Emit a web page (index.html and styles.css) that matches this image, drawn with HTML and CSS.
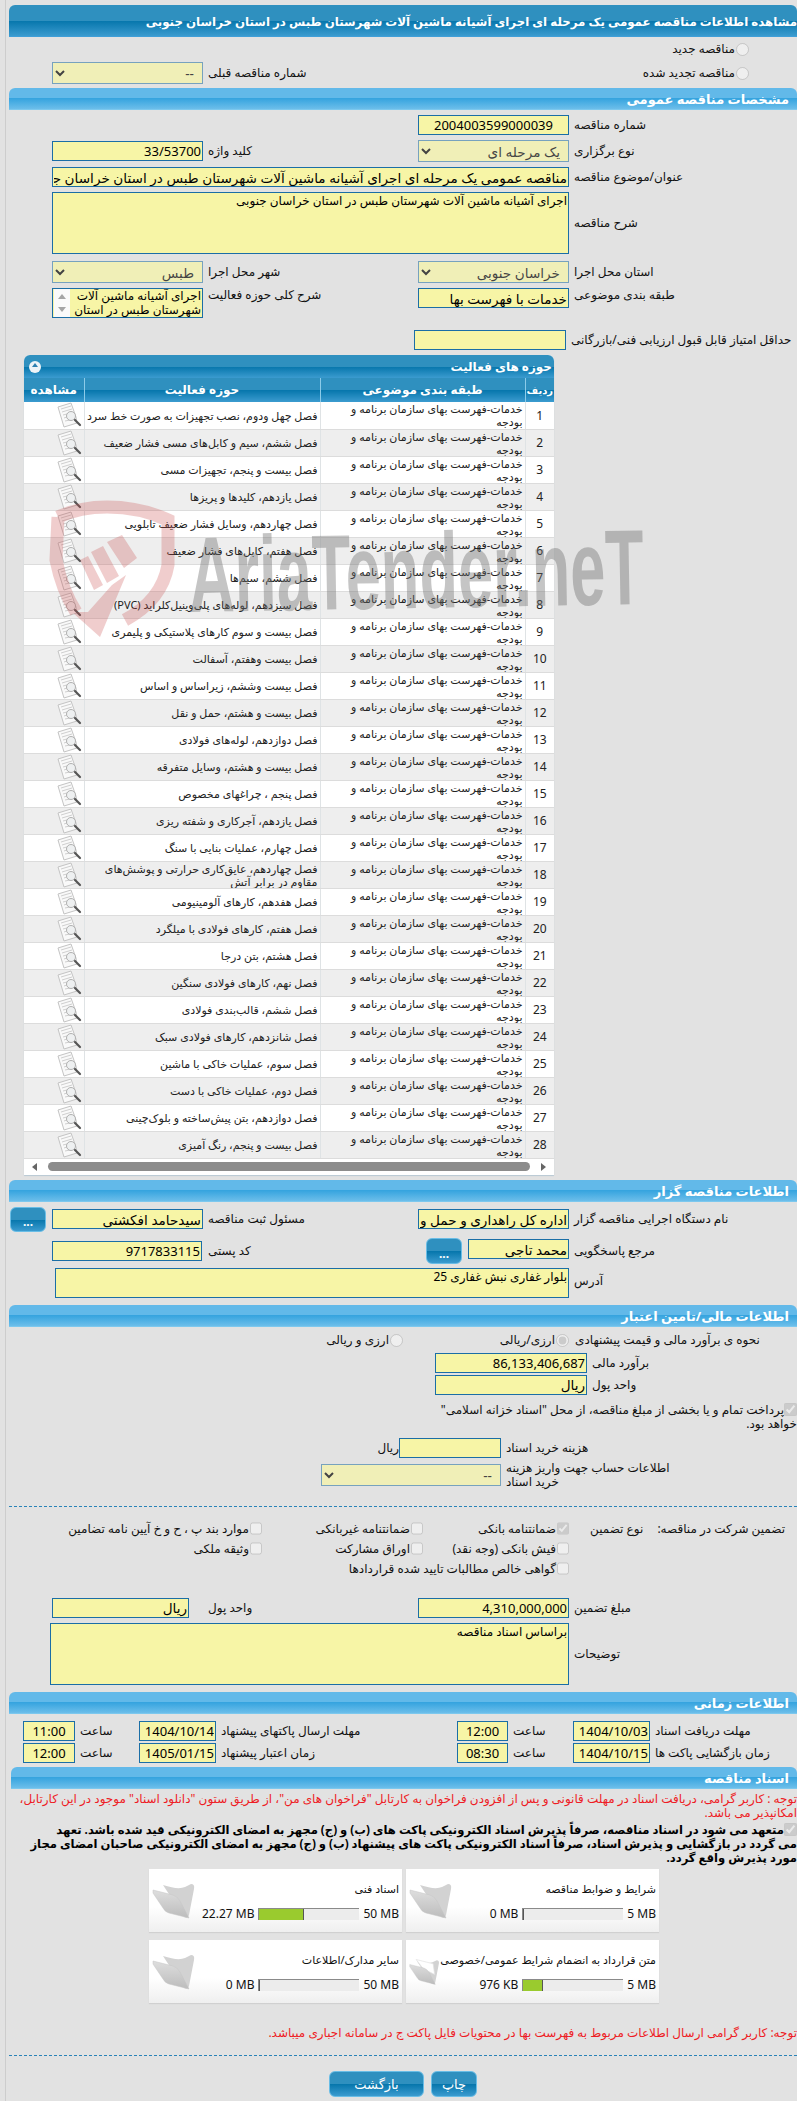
FILE: index.html
```html
<!DOCTYPE html>
<html lang="fa" dir="rtl">
<head>
    <meta charset="UTF-8">
    <title>مشاهده اطلاعات مناقصه عمومی</title>
    <link rel="stylesheet" href="styles.css">
</head>
<body>
<svg class="defs" aria-hidden="true">
    <defs>
        <linearGradient id="fold" x1="0" y1="0" x2="0" y2="1">
            <stop offset="0" stop-color="#dedede"/>
            <stop offset="1" stop-color="#bcbcbc"/>
        </linearGradient>
        <symbol id="doc" viewBox="0 0 26 26">
            <path d="M2 5 L15 1 L20 15 L21 21 L8 25 Z" fill="#f9f9f9" stroke="#c4c4c4"/>
            <path d="M5 7 L15 4 M6 10 L16 7 M7 13 L11 12 M8 16 L11 15 M9 19 L14 18" stroke="#cfcfcf" fill="none"/>
            <circle cx="15" cy="14" r="4.5" fill="#eef0f1" stroke="#b0b0b0"/>
            <path d="M19 18 L24 23" stroke="#555" stroke-width="2.2" stroke-linecap="round"/>
        </symbol>
        <symbol id="folder" viewBox="0 0 44 40">
            <path d="M11 3 Q26 8 33 5 L39 2 Q43 2 42 7 L37 33 Q36 37 32 35 Z" fill="#d2d2d2"/>
            <path d="M1 8 L21 13 Q25 14 28 19 L37 36 L17 31 Q13 30 11 26 L1 11 Z" fill="url(#fold)" stroke="#c4c4c4" stroke-width=".5"/>
        </symbol>
        <symbol id="folder-open" viewBox="0 0 44 40">
            <path d="M11 3 Q26 8 33 5 L39 2 Q43 2 42 7 L37 33 Q36 37 32 35 Z" fill="#d2d2d2"/>
            <path d="M10 1 L34 7 L36 22 L20 14 Z" fill="#fff" stroke="#e2e2e2"/>
            <path d="M1 8 L21 13 Q25 14 28 19 L37 36 L17 31 Q13 30 11 26 L1 11 Z" fill="url(#fold)" stroke="#c4c4c4" stroke-width=".5"/>
        </symbol>
    </defs>
</svg>

<div class="page">
    <h1 class="bar bar-main">مشاهده اطلاعات مناقصه عمومی یک مرحله ای اجرای آشیانه ماشین آلات شهرستان طبس در استان خراسان جنوبی</h1>

    <label class="radio-line"><input type="radio" name="kind" disabled>مناقصه جدید</label>
    <div class="row row-prev">
        <label class="radio-line radio-cell"><input type="radio" name="kind" disabled>مناقصه تجدید شده</label>
        <div class="lbl col-3">شماره مناقصه قبلی</div>
        <select class="field field-select" disabled><option>--</option></select>
    </div>

    <h2 class="bar">مشخصات مناقصه عمومی</h2>
    <div class="rows">
        <div class="row">
            <div class="lbl">شماره مناقصه</div>
            <input class="field num center" readonly value="2004003599000039">
        </div>
        <div class="row">
            <div class="lbl">نوع برگزاری</div>
            <select class="field field-select" disabled><option>یک مرحله ای</option></select>
            <div class="lbl">کلید واژه</div>
            <input class="field num" readonly value="33/53700">
        </div>
        <div class="row">
            <div class="lbl">عنوان/موضوع مناقصه</div>
            <input class="field span-3" readonly value="مناقصه عمومی یک مرحله ای اجرای آشیانه ماشین آلات شهرستان طبس در استان خراسان جنوبی">
        </div>
        <div class="row">
            <div class="lbl">شرح مناقصه</div>
            <textarea class="field span-3 area-62" readonly>اجرای آشیانه ماشین آلات شهرستان طبس در استان خراسان جنوبی</textarea>
        </div>
        <div class="row gap-top-2">
            <div class="lbl">استان محل اجرا</div>
            <select class="field field-select" disabled><option>خراسان جنوبی</option></select>
            <div class="lbl">شهر محل اجرا</div>
            <select class="field field-select" disabled><option>طبس</option></select>
        </div>
        <div class="row row-top">
            <div class="lbl">طبقه بندی موضوعی</div>
            <input class="field" readonly value="خدمات با فهرست بها">
            <div class="lbl">شرح کلی حوزه فعالیت</div>
            <div class="field field-list">
                <div class="list-text">اجرای آشیانه ماشین آلات شهرستان طبس در استان خراسان جنوبی</div>
                <div class="list-scroll"><span class="tri-up"></span><span class="tri-down"></span></div>
            </div>
        </div>
        <div class="row row-score">
            <div class="lbl">حداقل امتیاز قابل قبول ارزیابی فنی/بازرگانی</div>
            <input class="field" readonly>
        </div>
    </div>

    <div class="panel">
        <div class="panel-head">
            <span>حوزه های فعالیت</span>
            <span class="collapse"></span>
        </div>
        <table class="grid">
            <colgroup><col class="c-no"><col class="c-cat"><col class="c-act"><col class="c-view"></colgroup>
            <thead>
                <tr><th>ردیف</th><th>طبقه بندی موضوعی</th><th>حوزه فعالیت</th><th>مشاهده</th></tr>
            </thead>
            <tbody>
                <tr><td>1</td><td>خدمات-فهرست بهای سازمان برنامه و بودجه</td><td>فصل چهل ودوم، نصب تجهیزات به صورت خط سرد</td><td><svg class="ico"><use href="#doc"/></svg></td></tr>
                <tr><td>2</td><td>خدمات-فهرست بهای سازمان برنامه و بودجه</td><td>فصل ششم، سیم و کابل‌های مسی فشار ضعیف</td><td><svg class="ico"><use href="#doc"/></svg></td></tr>
                <tr><td>3</td><td>خدمات-فهرست بهای سازمان برنامه و بودجه</td><td>فصل بیست و پنجم، تجهیزات مسی</td><td><svg class="ico"><use href="#doc"/></svg></td></tr>
                <tr><td>4</td><td>خدمات-فهرست بهای سازمان برنامه و بودجه</td><td>فصل یازدهم، کلیدها و پریزها</td><td><svg class="ico"><use href="#doc"/></svg></td></tr>
                <tr><td>5</td><td>خدمات-فهرست بهای سازمان برنامه و بودجه</td><td>فصل چهاردهم، وسایل فشار ضعیف تابلویی</td><td><svg class="ico"><use href="#doc"/></svg></td></tr>
                <tr><td>6</td><td>خدمات-فهرست بهای سازمان برنامه و بودجه</td><td>فصل هفتم، کابل‌های فشار ضعیف</td><td><svg class="ico"><use href="#doc"/></svg></td></tr>
                <tr><td>7</td><td>خدمات-فهرست بهای سازمان برنامه و بودجه</td><td>فصل ششم، سیم‌ها</td><td><svg class="ico"><use href="#doc"/></svg></td></tr>
                <tr><td>8</td><td>خدمات-فهرست بهای سازمان برنامه و بودجه</td><td>فصل سیزدهم، لوله‌های پلی‌وینیل‌کلراید (PVC)</td><td><svg class="ico"><use href="#doc"/></svg></td></tr>
                <tr><td>9</td><td>خدمات-فهرست بهای سازمان برنامه و بودجه</td><td>فصل بیست و سوم کارهای پلاستیکی و پلیمری</td><td><svg class="ico"><use href="#doc"/></svg></td></tr>
                <tr><td>10</td><td>خدمات-فهرست بهای سازمان برنامه و بودجه</td><td>فصل بیست وهفتم، آسفالت</td><td><svg class="ico"><use href="#doc"/></svg></td></tr>
                <tr><td>11</td><td>خدمات-فهرست بهای سازمان برنامه و بودجه</td><td>فصل بیست وششم، زیراساس و اساس</td><td><svg class="ico"><use href="#doc"/></svg></td></tr>
                <tr><td>12</td><td>خدمات-فهرست بهای سازمان برنامه و بودجه</td><td>فصل بیست و هشتم، حمل و نقل</td><td><svg class="ico"><use href="#doc"/></svg></td></tr>
                <tr><td>13</td><td>خدمات-فهرست بهای سازمان برنامه و بودجه</td><td>فصل دوازدهم، لوله‌های فولادی</td><td><svg class="ico"><use href="#doc"/></svg></td></tr>
                <tr><td>14</td><td>خدمات-فهرست بهای سازمان برنامه و بودجه</td><td>فصل بیست و هشتم، وسایل متفرقه</td><td><svg class="ico"><use href="#doc"/></svg></td></tr>
                <tr><td>15</td><td>خدمات-فهرست بهای سازمان برنامه و بودجه</td><td>فصل پنجم ، چراغهای مخصوص</td><td><svg class="ico"><use href="#doc"/></svg></td></tr>
                <tr><td>16</td><td>خدمات-فهرست بهای سازمان برنامه و بودجه</td><td>فصل یازدهم، آجرکاری و شفته ریزی</td><td><svg class="ico"><use href="#doc"/></svg></td></tr>
                <tr><td>17</td><td>خدمات-فهرست بهای سازمان برنامه و بودجه</td><td>فصل چهارم، عملیات بنایی با سنگ</td><td><svg class="ico"><use href="#doc"/></svg></td></tr>
                <tr><td>18</td><td>خدمات-فهرست بهای سازمان برنامه و بودجه</td><td>فصل چهاردهم، عایق‌کاری حرارتی و پوشش‌های مقاوم در برابر آتش</td><td><svg class="ico"><use href="#doc"/></svg></td></tr>
                <tr><td>19</td><td>خدمات-فهرست بهای سازمان برنامه و بودجه</td><td>فصل هفدهم، کارهای آلومینیومی</td><td><svg class="ico"><use href="#doc"/></svg></td></tr>
                <tr><td>20</td><td>خدمات-فهرست بهای سازمان برنامه و بودجه</td><td>فصل هفتم، کارهای فولادی با میلگرد</td><td><svg class="ico"><use href="#doc"/></svg></td></tr>
                <tr><td>21</td><td>خدمات-فهرست بهای سازمان برنامه و بودجه</td><td>فصل هشتم، بتن درجا</td><td><svg class="ico"><use href="#doc"/></svg></td></tr>
                <tr><td>22</td><td>خدمات-فهرست بهای سازمان برنامه و بودجه</td><td>فصل نهم، کارهای فولادی سنگین</td><td><svg class="ico"><use href="#doc"/></svg></td></tr>
                <tr><td>23</td><td>خدمات-فهرست بهای سازمان برنامه و بودجه</td><td>فصل ششم، قالب‌بندی فولادی</td><td><svg class="ico"><use href="#doc"/></svg></td></tr>
                <tr><td>24</td><td>خدمات-فهرست بهای سازمان برنامه و بودجه</td><td>فصل شانزدهم، کارهای فولادی سبک</td><td><svg class="ico"><use href="#doc"/></svg></td></tr>
                <tr><td>25</td><td>خدمات-فهرست بهای سازمان برنامه و بودجه</td><td>فصل سوم، عملیات خاکی با ماشین</td><td><svg class="ico"><use href="#doc"/></svg></td></tr>
                <tr><td>26</td><td>خدمات-فهرست بهای سازمان برنامه و بودجه</td><td>فصل دوم، عملیات خاکی با دست</td><td><svg class="ico"><use href="#doc"/></svg></td></tr>
                <tr><td>27</td><td>خدمات-فهرست بهای سازمان برنامه و بودجه</td><td>فصل دوازدهم، بتن پیش‌ساخته و بلوک‌چینی</td><td><svg class="ico"><use href="#doc"/></svg></td></tr>
                <tr><td>28</td><td>خدمات-فهرست بهای سازمان برنامه و بودجه</td><td>فصل بیست و پنجم، رنگ آمیزی</td><td><svg class="ico"><use href="#doc"/></svg></td></tr>
            </tbody>
        </table>
        <div class="hscroll">
            <span class="arrow arrow-r"></span>
            <span class="thumb"></span>
            <span class="arrow arrow-l"></span>
        </div>
    </div>

    <!-- tender owner -->
    <h2 class="bar bar-owner">اطلاعات مناقصه گزار</h2>
    <div class="owner">
        <div class="row row-btn">
            <div class="lbl">نام دستگاه اجرایی مناقصه گزار</div>
            <input class="field" readonly value="اداره کل راهداری و حمل و نقل جاده ای خراسان جنوبی">
            <div class="lbl">مسئول ثبت مناقصه</div>
            <input class="field" readonly value="سیدحامد افکشتی">
            <button class="btn btn-dots btn-end">...</button>
        </div>
        <div class="row row-ref">
            <div class="lbl">مرجع پاسخگویی</div>
            <div class="ref-cell">
                <input class="field field-ref" readonly value="محمد تاجی">
                <button class="btn btn-dots">...</button>
            </div>
            <div class="lbl">کد پستی</div>
            <input class="field num field-post" readonly value="9717833115">
        </div>
        <div class="row">
            <div class="lbl">آدرس</div>
            <textarea class="field address" readonly>بلوار غفاری نبش غفاری 25</textarea>
        </div>
    </div>

    <h2 class="bar bar-money">اطلاعات مالی/تامین اعتبار</h2>
    <div class="money-type">
        <div class="lbl">نحوه ی برآورد مالی و قیمت پیشنهادی</div>
        <label class="radio-line radio-cell"><input type="radio" name="cur" checked disabled>ارزی/ریالی</label>
        <label class="radio-line radio-cell"><input type="radio" name="cur" disabled>ارزی و ریالی</label>
    </div>
    <div class="row row-money">
        <div class="lbl">برآورد مالی</div>
        <input class="field num" readonly value="86,133,406,687">
    </div>
    <div class="row row-money row-tight">
        <div class="lbl">واحد پول</div>
        <input class="field" readonly value="ریال">
    </div>
    <label class="treasury"><input type="checkbox" checked disabled>پرداخت تمام و یا بخشی از مبلغ مناقصه، از محل "اسناد خزانه اسلامی" خواهد بود.</label>
    <div class="row row-fee">
        <div class="lbl">هزینه خرید اسناد</div>
        <input class="field" readonly>
        <div class="lbl">ریال</div>
    </div>
    <div class="row row-account">
        <div class="lbl lbl-two">اطلاعات حساب جهت واریز هزینه خرید اسناد</div>
        <select class="field field-select" disabled><option>--</option></select>
    </div>

    <hr class="dash dash-money">

    <div class="guarantee">
        <div class="guarantee-head"><span>تضمین شرکت در مناقصه:</span><span>نوع تضمین</span></div>
        <label class="check"><input type="checkbox" checked disabled>ضمانتنامه بانکی</label>
        <label class="check"><input type="checkbox" disabled>ضمانتنامه غیربانکی</label>
        <label class="check"><input type="checkbox" disabled>موارد بند پ ، ح و خ آیین نامه تضامین</label>
        <span></span>
        <label class="check"><input type="checkbox" disabled>فیش بانکی (وجه نقد)</label>
        <label class="check"><input type="checkbox" disabled>اوراق مشارکت</label>
        <label class="check"><input type="checkbox" disabled>وثیقه ملکی</label>
        <span></span>
        <label class="check check-wide"><input type="checkbox" disabled>گواهی خالص مطالبات تایید شده قراردادها</label>
    </div>
    <div class="row row-amount">
        <div class="lbl">مبلغ تضمین</div>
        <input class="field num" readonly value="4,310,000,000">
        <div class="lbl">واحد پول</div>
        <input class="field field-unit" readonly value="ریال">
    </div>
    <div class="row row-notes">
        <div class="lbl">توضیحات</div>
        <textarea class="field span-3 area-notes" readonly>براساس اسناد مناقصه</textarea>
    </div>

    <h2 class="bar bar-time">اطلاعات زمانی</h2>
    <div class="times">
        <div class="lbl">مهلت دریافت اسناد</div>
        <input class="field num" readonly value="1404/10/03">
        <div class="lbl">ساعت</div>
        <input class="field num center" readonly value="12:00">
        <div class="lbl">مهلت ارسال پاکتهای پیشنهاد</div>
        <input class="field num" readonly value="1404/10/14">
        <div class="lbl">ساعت</div>
        <input class="field num center" readonly value="11:00">
        <div class="lbl">زمان بازگشایی پاکت ها</div>
        <input class="field num" readonly value="1404/10/15">
        <div class="lbl">ساعت</div>
        <input class="field num center" readonly value="08:30">
        <div class="lbl">زمان اعتبار پیشنهاد</div>
        <input class="field num" readonly value="1405/01/15">
        <div class="lbl">ساعت</div>
        <input class="field num center" readonly value="12:00">
    </div>

    <h2 class="bar bar-docs">اسناد مناقصه</h2>
    <p class="note-red">توجه : کاربر گرامی، دریافت اسناد در مهلت قانونی و پس از افزودن فراخوان به کارتابل "فراخوان های من"، از طریق ستون "دانلود اسناد" موجود در این کارتابل، امکانپذیر می باشد.</p>
    <label class="pledge"><input type="checkbox" checked disabled>متعهد می شود در اسناد مناقصه، صرفاً پذیرش اسناد الکترونیکی پاکت های (ب) و (ج) مجهز به امضای الکترونیکی قید شده باشد. تعهد<br>می گردد در بازگشایی و پذیرش اسناد، صرفاً اسناد الکترونیکی پاکت های پیشنهاد (ب) و (ج) مجهز به امضای الکترونیکی صاحبان امضای مجاز<br>مورد پذیرش واقع گردد.</label>

    <div class="cards">
        <div class="card">
            <div class="card-text">
                <div class="card-title">شرایط و ضوابط مناقصه</div>
                <div class="meter"><span>5 MB</span><div class="meter-bar"><div class="meter-fill" style="width:1px"></div></div><span>0 MB</span></div>
            </div>
            <svg class="folder"><use href="#folder"/></svg>
        </div>
        <div class="card">
            <div class="card-text">
                <div class="card-title">اسناد فنی</div>
                <div class="meter"><span>50 MB</span><div class="meter-bar"><div class="meter-fill" style="width:46px"></div></div><span>22.27 MB</span></div>
            </div>
            <svg class="folder"><use href="#folder"/></svg>
        </div>
        <div class="card">
            <div class="card-text">
                <div class="card-title">متن قرارداد به انضمام شرایط عمومی/خصوصی</div>
                <div class="meter"><span>5 MB</span><div class="meter-bar"><div class="meter-fill" style="width:21px"></div></div><span>976 KB</span></div>
            </div>
            <svg class="folder"><use href="#folder-open"/></svg>
        </div>
        <div class="card">
            <div class="card-text">
                <div class="card-title">سایر مدارک/اطلاعات</div>
                <div class="meter"><span>50 MB</span><div class="meter-bar"><div class="meter-fill" style="width:1px"></div></div><span>0 MB</span></div>
            </div>
            <svg class="folder"><use href="#folder"/></svg>
        </div>
    </div>

    <p class="note-red note-price">توجه: کاربر گرامی ارسال اطلاعات مربوط به فهرست بها در محتویات فایل پاکت ج در سامانه اجباری میباشد.</p>
    <hr class="dash dash-end">
    <div class="actions">
        <button class="btn btn-print">چاپ</button>
        <button class="btn btn-back">بازگشت</button>
    </div>
</div>

<!-- site watermark, sits over the page -->
<div class="watermark" aria-hidden="true">
    <svg class="wm-logo" viewBox="45 495 140 150">
        <path d="M58 517 Q80 507 107 507 Q140 507 168 520 L168 565 Q162 600 125 620" fill="none" stroke="#c94a4a" stroke-width="13"/>
        <path d="M58 517 L56 560 Q62 590 76 612" fill="none" stroke="#c94a4a" stroke-width="13"/>
        <path d="M107 542 L122 535 L137 558 L124 568 Z M91 552 L103 546 L119 576 L107 583 Z M80 560 L88 556 L103 585 L94 590 Z" fill="#c94a4a"/>
        <path d="M112 585 L126 575 L100 637 L72 612 L88 612 Z" fill="#c94a4a"/>
    </svg>
    <div class="wm-text" dir="ltr">AriaTender.neT</div>
</div>
</body>
</html>
```

FILE: styles.css
```css
* {
    box-sizing: border-box;
}
html {
    overflow: hidden;
}
body {
    margin: 0;
    position: relative;
    background-color: #e2e2e2;
    color: #111;
    font-family: "Noto Sans", "DejaVu Sans", sans-serif;
    font-size: 12px;
    line-height: 14px;
}
.defs {
    position: absolute;
    width: 0;
    height: 0;
}
.page {
    margin-left: 5px;
    padding: 5px 0 0 3px;
    border-left: 1px solid #cdcdcd;
    height: 2101px;
    overflow: hidden;
}

/* header bars */
.bar {
    height: 22px;
    margin: 0;
    padding: 0 8px;
    color: #fff;
    font-size: 13px;
    font-weight: bold;
    line-height: 22px;
    white-space: nowrap;
    overflow: hidden;
    border-radius: 6px 6px 0 0;
    border-bottom: 1px solid #7cc8ee;
    background: linear-gradient(#62b9e9 0, #62b9e9 48%, #36a4df 50%, #6cbeea 100%);
}
.bar-main {
    height: 32px;
    padding: 0;
    font-size: 11.8px;
    line-height: 32px;
    border-bottom-color: #3f9fd8;
    background: linear-gradient(#2f90bf 0, #2f90bf 50%, #0676ac 51%, #3b9bcf 100%);
}
.bar-owner { margin-top: 5px; }
.bar-money { margin-top: 7px; }
.bar-time { margin-top: 7px; }
.bar-docs { margin-top: 4px; margin-left: 2px; }

/* form rows */
.row {
    display: grid;
    grid-template-columns: 228px 151px 215px 151px 43px;
    align-items: center;
}
.rows {
    display: flex;
    flex-direction: column;
    gap: 5px;
    padding-top: 5px;
}
.lbl {
    padding-left: 5px;
    text-align: left;
    white-space: nowrap;
}
.field {
    width: 100%;
    height: 20px;
    margin: 0;
    padding: 0 1px;
    border: 1px solid #1b6ea6;
    border-radius: 0;
    background: #f7f5a6;
    color: #000;
    font: 13.6px/16px "Noto Sans", "DejaVu Sans", sans-serif;
    outline: none;
    resize: none;
    text-align: right;
}
textarea.field { font-size: 12px; }
.num { font-size: 13px; }
.center { text-align: center; }
.field-select {
    height: 22px;
    padding-right: 4px;
    border-color: #4b87b0;
}
.span-3 { grid-column: span 3; }
.col-3 { grid-column: 3; grid-row: 1; }
.area-62 { height: 62px; }
.gap-top-2 { margin-top: 2px; }
.row-top { align-items: start; }
.field-list {
    display: flex;
    height: 30px;
    overflow: hidden;
    font-size: 12px;
    line-height: 14px;
}
.list-text { flex: 1; overflow: hidden; }
.list-scroll {
    display: flex;
    flex-direction: column;
    justify-content: space-between;
    align-items: center;
    width: 16px;
    padding: 5px 0;
    background: #fafafa;
}
.tri-up, .tri-down {
    width: 0;
    height: 0;
    border: 4px solid transparent;
    border-top: 0;
    border-bottom: 5px solid #a5a5a5;
}
.tri-down {
    border-bottom: 0;
    border-top: 5px solid #a5a5a5;
}
.row-score {
    grid-template-columns: 231px 152px;
    margin-top: 7px;
}

.radio-line {
    display: flex;
    align-items: center;
    height: 24px;
    padding-right: 48px;
    white-space: nowrap;
}
.radio-line input {
    width: 13px;
    height: 13px;
    margin: 0 0 0 1px;
}
.row-prev { height: 22px; margin-bottom: 5px; }
.row-prev .radio-cell { grid-column: 1 / span 2; grid-row: 1; }
.row-prev .field { grid-column: 4; grid-row: 1; }

/* activity table */
.panel {
    width: 530px;
    margin: 5px 243px 0 0;
    background: #fff;
    border-radius: 6px 6px 0 0;
    box-shadow: 0 1px 1px #b9c9d4;
}
.panel-head {
    display: flex;
    justify-content: space-between;
    align-items: center;
    height: 23px;
    padding: 0 2px 0 5px;
    color: #fff;
    font-weight: bold;
    border-radius: 6px 6px 0 0;
    background: linear-gradient(#2f90bf 0, #2f90bf 50%, #0676ac 51%, #3b9bcf 100%);
}
.collapse {
    width: 12px;
    height: 12px;
    border-radius: 50%;
    background: #eef3f7;
    position: relative;
}
.collapse::after {
    content: "";
    position: absolute;
    left: 3px;
    top: 2px;
    border: 3px solid transparent;
    border-top: 0;
    border-bottom: 4px solid #2f80b0;
}
.grid {
    width: 530px;
    border-collapse: collapse;
    table-layout: fixed;
}
.c-no { width: 29px; }
.c-cat { width: 205px; }
.c-act { width: 236px; }
.c-view { width: 60px; }
.grid th {
    height: 24px;
    padding: 0;
    color: #fff;
    font-size: 12px;
    border-left: 1px solid #8ccbe9;
    background: linear-gradient(#2f90bf 0, #2f90bf 50%, #0676ac 51%, #3b9bcf 100%);
}
.grid th:first-child { font-size: 10px; }
.grid th:last-child { border-left: 0; }
.grid td {
    height: 27px;
    padding: 0 2px;
    border-left: 1px solid #dfe3e5;
    border-bottom: 1px solid #dcdcdc;
    color: #222;
    font-size: 11px;
    line-height: 13px;
    overflow: hidden;
}
.grid td:first-child {
    text-align: center;
    font-size: 12px;
}
.grid td:last-child { border-left: 0; padding: 0; }
.grid tr:nth-child(even) td { background: #eeeeee; }
.ico {
    display: block;
    width: 26px;
    height: 26px;
    margin-right: 2px;
}
.hscroll {
    display: flex;
    align-items: center;
    gap: 7px;
    height: 16px;
    padding: 0 4px;
}
.thumb {
    flex: 1;
    height: 9px;
    border-radius: 5px;
    background: #8c8c8c;
}
.arrow {
    width: 0;
    height: 0;
    border: 4px solid transparent;
    border-left: 0;
    border-right: 5px solid #666;
    margin: 0 4px;
}
.arrow-r {
    border-right: 0;
    border-left: 5px solid #666;
}

/* tender owner */
.owner {
    display: flex;
    flex-direction: column;
}
.btn {
    border: 1px solid #69bde6;
    border-radius: 6px;
    color: #fff;
    font: 13px/14px "Noto Sans", "DejaVu Sans", sans-serif;
    padding: 0;
    background: linear-gradient(#2f90bf 0, #2f90bf 50%, #0676ac 51%, #3b9bcf 100%);
}
.btn-dots {
    width: 36px;
    height: 25px;
    font-size: 12px;
    font-weight: bold;
    padding-top: 6px;
}
.btn-end {
    justify-self: end;
    margin-left: 1px;
}
.row-btn { margin-top: 5px; height: 25px; }
.row-ref { margin-top: 6px; height: 26px; }
.ref-cell {
    display: flex;
    gap: 6px;
    align-items: center;
}
.field-ref { width: 101px; margin-top: -3px; }
.ref-cell .btn { height: 26px; }
.field-post { width: 150px; justify-self: end; margin-left: 0; }
.address {
    grid-column: span 3;
    width: 514px;
    height: 30px;
    margin-top: 4px;
}

/* finance */
.money-type {
    display: flex;
    align-items: center;
    height: 23px;
    margin-top: 2px;
}
.money-type .lbl {
    width: 228px;
    padding-left: 6px;
}
.money-type .radio-cell { padding: 0; width: 166px; }
.row-money {
    grid-template-columns: 210px 152px;
    margin-top: 1px;
}
.row-tight { margin-top: 2px; }
.treasury {
    display: block;
    width: 376px;
    margin-top: 8px;
    line-height: 14px;
}
.treasury input, .pledge input {
    width: 13px;
    height: 13px;
    margin: 0;
    vertical-align: top;
}
.row-fee {
    grid-template-columns: 296px 102px auto;
    justify-content: start;
    margin-top: 7px;
}
.row-fee .lbl:last-child { padding-left: 0; padding-right: 0; }
.row-account {
    grid-template-columns: 296px 180px;
    margin-top: 3px;
}
.lbl-two {
    width: 170px;
    justify-self: end;
    text-align: left;
    white-space: normal;
    line-height: 14px;
}

.dash {
    border: 0;
    border-top: 1px dashed #2a83b8;
    margin: 0;
}
.dash-money { margin-top: 17px; }

/* guarantee */
.guarantee {
    display: grid;
    grid-template-columns: 228px 146px 161px auto;
    grid-auto-rows: 20px;
    align-items: center;
    margin-top: 12px;
}
.guarantee-head {
    display: flex;
    justify-content: space-between;
    padding: 0 12px 0 21px;
    white-space: nowrap;
}
.check {
    display: flex;
    align-items: center;
    gap: 1px;
    white-space: nowrap;
}
.check input {
    width: 12px;
    height: 13px;
    margin: 0;
}
.check-wide { grid-column: span 3; }
.row-amount { margin-top: 19px; }
.field-unit { width: 137px; justify-self: end; }
.row-notes { margin-top: 5px; }
.area-notes { width: 519px; height: 62px; }

/* dates */
.times {
    display: grid;
    grid-template-columns: 147px 77px 65px 51px 241px 77px 64px 52px;
    row-gap: 2px;
    align-items: center;
    margin-top: 7px;
}

/* documents */
.note-red {
    margin: 3px 0 0;
    color: #ee1c25;
    font-size: 12px;
    line-height: 14px;
}
.pledge {
    display: block;
    margin-top: 3px;
    color: #000;
    font-size: 11.6px;
    font-weight: bold;
    line-height: 14px;
    white-space: nowrap;
}
.cards {
    display: grid;
    grid-template-columns: 253px 253px;
    gap: 8px 4px;
    margin: 4px 138px 0 0;
}
.card {
    display: flex;
    justify-content: space-between;
    height: 63px;
    padding: 13px 3px 0 3px;
    background: linear-gradient(#fff 60%, #efefef 100%);
    box-shadow: 0 1px 1px #d0d0d0;
}
.card-text {
    flex: 1;
}
.card-title {
    font-size: 11px;
    line-height: 14px;
    white-space: nowrap;
}
.meter {
    display: flex;
    align-items: center;
    gap: 4px;
    margin-top: 11px;
    font-size: 12px;
    white-space: nowrap;
}
.meter span { direction: ltr; }
.meter-bar {
    width: 101px;
    height: 12px;
    border-top: 1px solid #8a8a8a;
    background: #ececec;
    direction: ltr;
}
.meter-fill {
    height: 100%;
    background: #9acb2e;
    border-right: 1px solid #555;
    border-left: 1px solid #888;
}
.folder {
    width: 44px;
    height: 40px;
    margin-top: 0;
}
.note-price { margin-top: 23px; }
.dash-end { margin-top: 15px; }
.actions {
    display: flex;
    justify-content: flex-start;
    gap: 7px;
    padding-right: 320px;
    margin-top: 15px;
}
.btn-print { width: 46px; height: 26px; }
.btn-back { width: 95px; height: 26px; }

/* watermark */
.watermark {
    position: absolute;
    left: 45px;
    top: 495px;
    width: 620px;
    height: 150px;
    pointer-events: none;
}
.wm-logo {
    position: absolute;
    left: 0;
    top: 0;
    width: 140px;
    height: 150px;
    opacity: 0.27;
}
.wm-text {
    position: absolute;
    left: 145px;
    top: 20px;
    color: rgba(110, 110, 110, 0.4);
    font: bold 107px/120px "Liberation Sans", sans-serif;
    white-space: nowrap;
    transform-origin: left bottom;
    transform: rotate(-1deg) scaleX(0.59);
}
```
